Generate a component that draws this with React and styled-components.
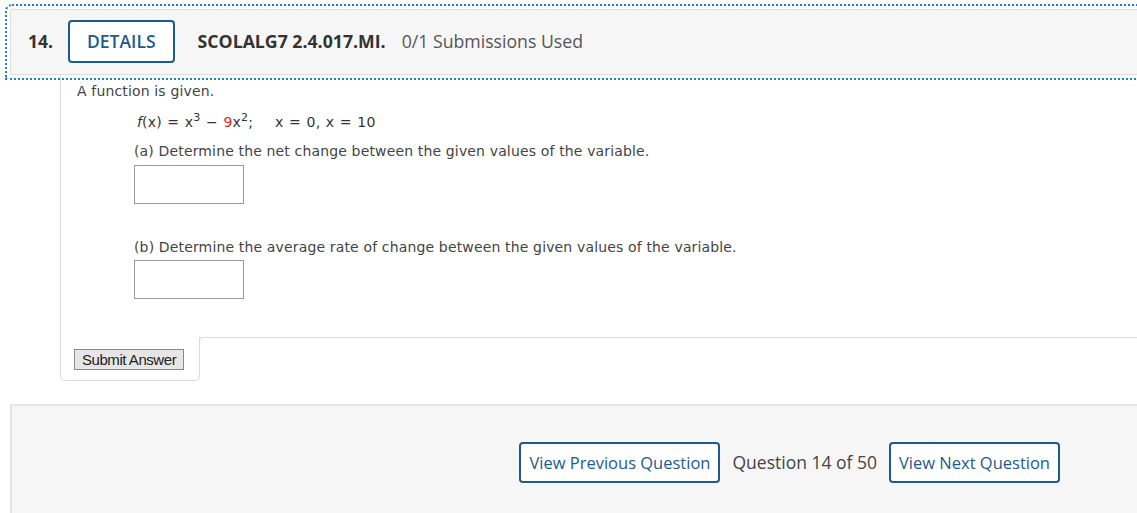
import React from "react";
import styled, { createGlobalStyle } from "styled-components";

const GlobalStyle = createGlobalStyle`
	html, body {
		margin: 0;
		padding: 0;
		background: #ffffff;
		overflow: hidden;
	}
	body {
		font-family: "Open Sans", "Liberation Sans", sans-serif;
		color: #333;
	}
`;

const Page = styled.div`
	width: calc(100% + 30px);
	padding-top: 9px;
	padding-left: 10px;
	box-sizing: border-box;
`;

const Header = styled.div`
	height: 66px;
	box-sizing: border-box;
	display: flex;
	align-items: center;
	background: #f6f6f6;
	border: 1px solid #dedede;
	border-right: none;
	border-top-left-radius: 2px;
	outline: 2px dotted #1c7fd9;
	outline-offset: 3px;
	padding-left: 17px;
	padding-bottom: 2px;
`;

const Number = styled.span`
	font-size: 17.5px;
	font-weight: 700;
	color: #333;
	margin-right: 15px;
`;

const OutlineButton = styled.button`
	font-family: "Open Sans", "Liberation Sans", sans-serif;
	font-size: ${props => props.size}px;
	font-weight: ${props => (props.bold ? 600 : 400)};
	color: #1d5b8c;
	background: #ffffff;
	border: 2px solid #1d5b8c;
	border-radius: 4px;
	height: ${props => props.height}px;
	padding: 0 ${props => props.pad}px;
	cursor: pointer;
`;

const Code = styled.span`
	font-size: 17.7px;
	font-weight: 700;
	color: #333;
	margin-left: 23px;
`;

const Submissions = styled.span`
	font-size: 17.7px;
	color: #555;
	margin-left: 16px;
`;

const Content = styled.div`
	margin-left: 50px;
	border-left: 1px solid #dcdcdc;
	padding: 7px 0 38px 16px;
	font-family: "DejaVu Sans", Verdana, sans-serif;
	font-size: 14px;
	letter-spacing: 0.15px;
	color: #444;
`;

const Line = styled.div`
	line-height: 18px;
	margin-left: ${props => props.indent || 0}px;
	margin-top: ${props => props.top || 0}px;
`;

const MathLine = styled.div`
	margin-left: 60px;
	margin-top: 13px;
	line-height: 18px;
	color: #333;
	word-spacing: 1px;
`;

const Ital = styled.i`
	font-style: italic;
`;

const Sup = styled.sup`
	font-size: 11px;
	line-height: 0;
`;

const Red = styled.span`
	color: #e8261b;
`;

const Gap = styled.span`
	display: inline-block;
	width: 22px;
`;

const AnswerBox = styled.input`
	display: block;
	width: 110px;
	height: 39px;
	box-sizing: border-box;
	border: 1px solid #9a9a9a;
	margin-left: 57px;
	margin-top: ${props => props.top}px;
`;

const SubmitRow = styled.div`
	display: flex;
	margin-left: 50px;
`;

const SubmitTab = styled.div`
	width: 140px;
	height: 44px;
	box-sizing: border-box;
	border: 1px solid #dcdcdc;
	border-top: none;
	border-radius: 0 0 5px 5px;
	padding: 12px 0 0 13px;
`;

const Filler = styled.div`
	flex: 1;
	border-top: 1px solid #dcdcdc;
	border-top-left-radius: 4px;
	border-left: 1px solid #dcdcdc;
	height: 40px;
	margin-left: -1px;
`;

const SubmitButton = styled.button`
	display: block;
	font-family: "Liberation Sans", Arial, sans-serif;
	font-size: 15px;
	color: #222;
	background: #e6e6e6;
	border: 1px solid #8a8a8a;
	height: 21px;
	line-height: 19px;
	padding: 0 7px;
	letter-spacing: -0.45px;
`;

const Footer = styled.div`
	margin-top: 23px;
	height: 120px;
	background: #f6f6f6;
	border-top: 2px solid #e6e6e6;
	border-left: 2px solid #e2e2e2;
	display: flex;
	justify-content: flex-end;
	align-items: flex-start;
	padding-top: 36px;
	padding-right: 107px;
	gap: 12px;
	box-sizing: border-box;
`;

const Counter = styled.span`
	font-size: 17.5px;
	color: #444;
	line-height: 40px;
`;

export default function App() {
	return (
		<Page>
			<GlobalStyle />
			<Header>
				<Number>14.</Number>
				<OutlineButton bold size={17.5} height={43} pad={17}>
					DETAILS
				</OutlineButton>
				<Code>SCOLALG7 2.4.017.MI.</Code>
				<Submissions>0/1 Submissions Used</Submissions>
			</Header>
			<Content>
				<Line>A function is given.</Line>
				<MathLine>
					<Ital>f</Ital>(x) = x<Sup>3</Sup> − <Red>9</Red>x<Sup>2</Sup>;<Gap />x = 0, x = 10
				</MathLine>
				<Line indent={57} top={11}>
					(a) Determine the net change between the given values of the variable.
				</Line>
				<AnswerBox top={5} />
				<Line indent={57} top={34}>
					(b) Determine the average rate of change between the given values of the variable.
				</Line>
				<AnswerBox top={4} />
			</Content>
			<SubmitRow>
				<SubmitTab>
					<SubmitButton>Submit Answer</SubmitButton>
				</SubmitTab>
				<Filler />
			</SubmitRow>
			<Footer>
				<OutlineButton size={16.5} height={41} pad={8}>
					View Previous Question
				</OutlineButton>
				<Counter>Question 14 of 50</Counter>
				<OutlineButton size={16.5} height={41} pad={8}>
					View Next Question
				</OutlineButton>
			</Footer>
		</Page>
	);
}
